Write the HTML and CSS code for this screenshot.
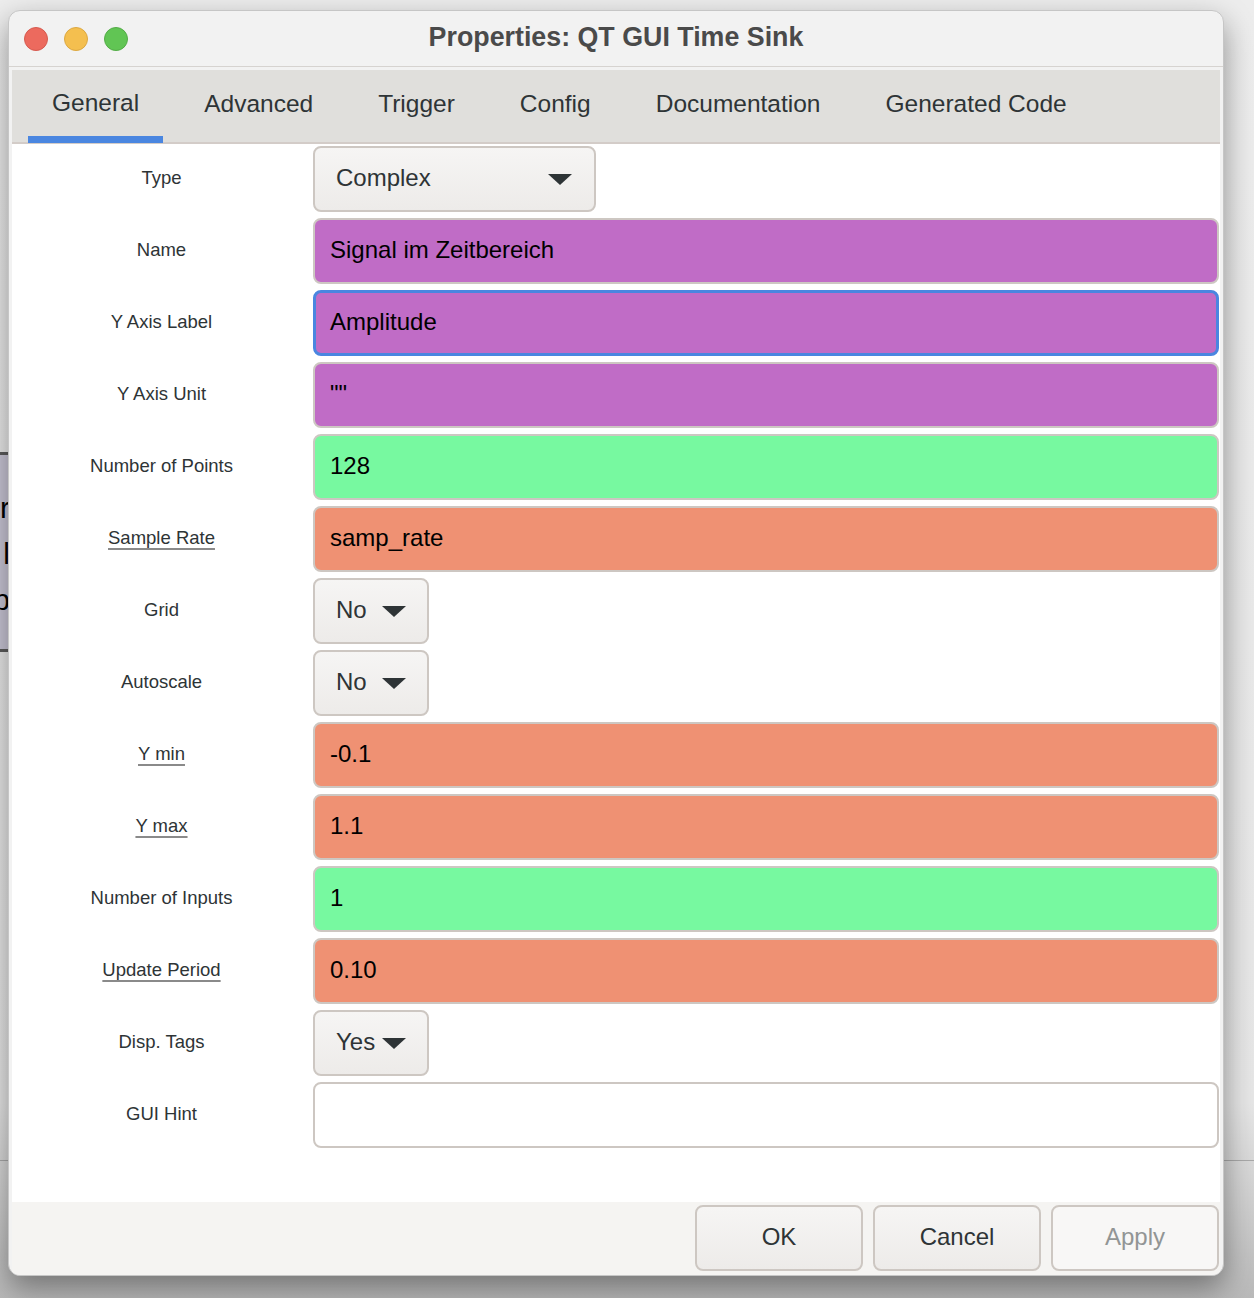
FILE: index.html
```html
<!DOCTYPE html>
<html lang="en">
<head>
    <meta charset="UTF-8">
    <title>Properties: QT GUI Time Sink</title>
    <link rel="stylesheet" href="styles.css">
</head>
<body>
    <!-- Bits of the flow graph window behind the dialog -->
    <div class="desk-line"></div>
    <div class="back-block">
        <span>r</span>
        <span>l</span>
        <span>p</span>
    </div>

    <div class="window">
        <div class="titlebar">
            <div class="lights">
                <span class="light red"></span>
                <span class="light yellow"></span>
                <span class="light green"></span>
            </div>
            <div class="title">Properties: QT GUI Time Sink</div>
            <div></div>
        </div>

        <div class="pane">
            <div class="tabs">
                <div class="tab active">General</div>
                <div class="tab">Advanced</div>
                <div class="tab">Trigger</div>
                <div class="tab">Config</div>
                <div class="tab">Documentation</div>
                <div class="tab">Generated Code</div>
            </div>

            <div class="form">
                <div class="label">Type</div>
                <div class="combo type-combo">Complex<span class="arrow"></span></div>

                <div class="label">Name</div>
                <div class="field string">Signal im Zeitbereich</div>

                <div class="label">Y Axis Label</div>
                <div class="field string focused">Amplitude</div>

                <div class="label">Y Axis Unit</div>
                <div class="field string">""</div>

                <div class="label">Number of Points</div>
                <div class="field int">128</div>

                <div class="label"><u>Sample Rate</u></div>
                <div class="field float">samp_rate</div>

                <div class="label">Grid</div>
                <div class="combo">No<span class="arrow"></span></div>

                <div class="label">Autoscale</div>
                <div class="combo">No<span class="arrow"></span></div>

                <div class="label"><u>Y min</u></div>
                <div class="field float">-0.1</div>

                <div class="label"><u>Y max</u></div>
                <div class="field float">1.1</div>

                <div class="label">Number of Inputs</div>
                <div class="field int">1</div>

                <div class="label"><u>Update Period</u></div>
                <div class="field float">0.10</div>

                <div class="label">Disp. Tags</div>
                <div class="combo">Yes<span class="arrow"></span></div>

                <div class="label">GUI Hint</div>
                <div class="field"></div>
            </div>

            <div class="footer">
                <button class="btn">OK</button>
                <button class="btn">Cancel</button>
                <button class="btn disabled">Apply</button>
            </div>
        </div>
    </div>
</body>
</html>
```

FILE: styles.css
```css
/* Page / desktop */
body {
    margin: 0;
    padding: 0;
    height: 1298px;
    overflow: hidden;
    position: relative;
    font-family: "Liberation Sans", Arial, sans-serif;
    background: linear-gradient(to bottom, #ededed 0%, #e6e6e6 85%, #b9b9b9 100%);
}

.desk-line {
    position: absolute;
    top: 1160px;
    left: 0;
    width: 100%;
    height: 1px;
    background: #a9a9a9;
}

/* Morceau de bloc visible à gauche, derrière la fenêtre */
.back-block {
    position: absolute;
    top: 452px;
    left: -24px;
    width: 40px;
    height: 200px;
    background: #c9c6d6;
    border-top: 3px solid #5c5c5c;
    border-bottom: 3px solid #5c5c5c;
    display: flex;
    flex-direction: column;
    align-items: flex-end;
    padding: 30px 6px 0 0;
    box-sizing: border-box;
    font-size: 30px;
    line-height: 46px;
    color: #000;
}

/* Fenêtre principale */
.window {
    position: relative;
    margin: 10px 0 0 8px;
    width: 1216px;
    height: 1266px;
    box-sizing: border-box;
    background: #f2f2f2;
    border: 1px solid #c6c6c6;
    border-radius: 12px;
    box-shadow: 0 12px 30px rgba(0, 0, 0, 0.4);
    overflow: hidden;
    display: flex;
    flex-direction: column;
}

/* Barre de titre */
.titlebar {
    height: 55px;
    flex-shrink: 0;
    display: grid;
    grid-template-columns: 1fr auto 1fr;
    align-items: center;
    border-bottom: 1px solid #d6d3d0;
}

.lights {
    display: flex;
    gap: 16px;
    padding-left: 15px;
}

.light {
    width: 24px;
    height: 24px;
    border-radius: 50%;
    box-sizing: border-box;
}

.red { background: #ec6a5e; border: 1px solid #d65a4f; }
.yellow { background: #f4bf4f; border: 1px solid #dca842; }
.green { background: #61c554; border: 1px solid #53ac47; }

.title {
    font-size: 26.8px;
    font-weight: bold;
    color: #4a4a4a;
    padding-bottom: 2px;
}

/* Contenu */
.pane {
    flex: 1;
    display: flex;
    flex-direction: column;
    margin: 3px 3px 0 3px;
}

.tabs {
    height: 72px;
    flex-shrink: 0;
    background: #e0dfdc;
    border-bottom: 2px solid #d3ccc8;
    display: flex;
    gap: 17px;
    padding-left: 16px;
}

.tab {
    padding: 0 24px 4px;
    font-size: 24.5px;
    color: #2e3436;
    display: flex;
    align-items: center;
    box-sizing: border-box;
}

.tab.active {
    border-bottom: 7px solid #4a86e0;
    padding-top: 3px;
    margin-bottom: -1px;
}

.form {
    flex: 1;
    background: #fff;
    display: grid;
    grid-template-columns: 301px 1fr;
    grid-auto-rows: 66px;
    row-gap: 6px;
    padding: 2px 1px 0 0;
    align-content: start;
}

.label {
    display: flex;
    align-items: center;
    justify-content: center;
    font-size: 18.5px;
    color: #2e3436;
    padding: 0 2px 2px 0;
}

.label u {
    text-decoration-color: #8a8a8a;
    text-underline-offset: 4px;
    text-decoration-thickness: 2px;
}

/* Champs de saisie colorés selon le type */
.field {
    box-sizing: border-box;
    border: 2px solid #cdc7c2;
    border-radius: 8px;
    background: #fff;
    padding: 0 16px 3px 15px;
    display: flex;
    align-items: center;
    font-size: 24px;
    color: #000;
}

.field.string { background: #c06cc6; }
.field.int { background: #77f9a0; }
.field.float { background: #ef9173; }

.field.focused {
    border: 3px solid #4a86e0;
    padding-left: 14px;
}

/* Listes déroulantes */
.combo {
    justify-self: start;
    box-sizing: border-box;
    min-width: 116px;
    height: 66px;
    border: 2px solid #cdc7c2;
    border-radius: 8px;
    background: linear-gradient(#f6f5f4, #edebe9);
    padding: 0 21px 3px 21px;
    display: flex;
    align-items: center;
    justify-content: space-between;
    gap: 6px;
    font-size: 24px;
    color: #2e3436;
}

.type-combo {
    width: 283px;
    padding-right: 22px;
}

.arrow {
    width: 0;
    height: 0;
    margin-top: 3px;
    border-left: 12px solid transparent;
    border-right: 12px solid transparent;
    border-top: 11px solid #2e3436;
}

/* Boutons du bas */
.footer {
    height: 73px;
    flex-shrink: 0;
    background: #f5f4f2;
    display: flex;
    justify-content: flex-end;
    align-items: flex-start;
    gap: 10px;
    padding: 3px 1px 0 0;
    box-sizing: border-box;
}

.btn {
    width: 168px;
    height: 66px;
    border: 2px solid #cdc7c2;
    border-radius: 8px;
    background: linear-gradient(#f6f5f4, #edebe9);
    font-family: "Liberation Sans", Arial, sans-serif;
    font-size: 24px;
    color: #2e3436;
    padding-bottom: 3px;
}

.btn.disabled {
    background: #f8f7f6;
    color: #929595;
}
```
